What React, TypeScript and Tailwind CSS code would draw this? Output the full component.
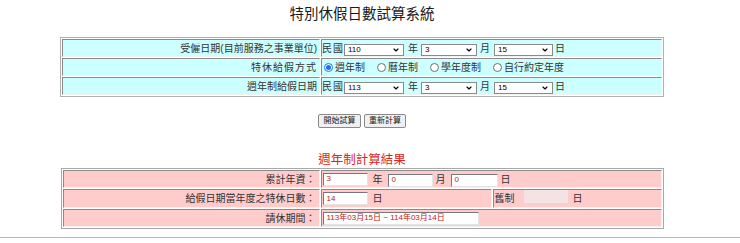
import { ChevronDown } from 'lucide-react'
import clsx from 'clsx'

const cell =
  'h-[18px] border border-t-[#8a8a8a] border-l-[#8a8a8a] border-b-[#f2f2f2] border-r-[#f2f2f2] p-0'

function Select({ value, width }: { value: string; width: string }) {
  return (
    <span
      className={clsx(
        'inline-flex h-[12px] items-center justify-between border border-[#8a8a8a] bg-white pl-[3px] pr-[3px] text-[8px] leading-none text-black',
        width
      )}
    >
      {value}
      <ChevronDown size={8} strokeWidth={3.5} />
    </span>
  )
}

function DateRow({ year }: { year: string }) {
  return (
    <div className="flex items-center">
      <span>民</span>
      <span className="ml-[1px]">國</span>
      <span className="ml-[1px]"><Select value={year} width="w-[60px]" /></span>
      <span className="ml-[4px]">年</span>
      <span className="ml-[3px]"><Select value="3" width="w-[56px]" /></span>
      <span className="ml-[3px]">月</span>
      <span className="ml-[4px]"><Select value="15" width="w-[59px]" /></span>
      <span className="ml-[2px]">日</span>
    </div>
  )
}

function Radio({ checked, label }: { checked?: boolean; label: string }) {
  return (
    <span className="inline-flex items-center gap-[2px]">
      <span
        className={clsx(
          'flex h-[9px] w-[9px] items-center justify-center rounded-full border bg-white',
          checked ? 'border-[#1a73e8]' : 'border-[#6f6f6f]'
        )}
      >
        {checked && <span className="h-[5px] w-[5px] rounded-full bg-[#1a73e8]" />}
      </span>
      {label}
    </span>
  )
}

function TextBox({ value, width, muted }: { value: string; width: string; muted?: boolean }) {
  return (
    <span
      className={clsx(
        'inline-flex h-[13px] items-center pl-[3px] text-[8px] leading-none text-[#c02020]',
        width,
        muted
          ? 'bg-[#f4e3e3]'
          : 'border border-t-[#777] border-l-[#777] border-b-[#e4e4e4] border-r-[#e4e4e4] bg-white'
      )}
    >
      {value}
    </span>
  )
}

export default function App() {
  return (
    <div className="w-[740px] bg-white font-['Liberation_Sans','Noto_Sans_CJK_TC',sans-serif] text-[10px] text-[#333]">
      <div className="flex w-[724px] flex-col items-center">
        <h1 className="pt-[6px] text-[14.5px] leading-[17px] font-normal text-[#1a1a1a]">特別休假日數試算系統</h1>

        <table className="mt-[14px] w-[604px] border-separate border-spacing-[1px] border border-[#b0b0b0] bg-white">
          <tbody className="bg-[#ccffff]">
            <tr>
              <td className={clsx(cell, 'w-[258px] pr-[2px] text-right')}>受僱日期(目前服務之事業單位)</td>
              <td className={cell}>
                <DateRow year="110" />
              </td>
            </tr>
            <tr>
              <td className={clsx(cell, 'pr-[2px] text-right tracking-[1px]')}>特休給假方式</td>
              <td className={cell}>
                <div className="flex items-center gap-[12px] pl-[2px]">
                  <Radio checked label="週年制" />
                  <Radio label="曆年制" />
                  <Radio label="學年度制" />
                  <Radio label="自行約定年度" />
                </div>
              </td>
            </tr>
            <tr>
              <td className={clsx(cell, 'pr-[2px] text-right')}>週年制給假日期</td>
              <td className={cell}>
                <DateRow year="113" />
              </td>
            </tr>
          </tbody>
        </table>

        <div className="mt-[17px] flex gap-[3px]">
          <button className="h-[14px] w-[43px] rounded-[2px] border border-[#8a8a8a] bg-[#f0f0f0] text-[8px] leading-none text-[#222]">
            開始試算
          </button>
          <button className="h-[14px] w-[42px] rounded-[2px] border border-[#8a8a8a] bg-[#f0f0f0] text-[8px] leading-none text-[#222]">
            重新計算
          </button>
        </div>

        <h2 className="mt-[24px] text-[12.5px] leading-[16px] font-normal text-[#e02424]">週年制計算結果</h2>

        <table className="w-[603px] border-separate border-spacing-[1px] border border-[#a8a8a8] bg-white">
          <tbody className="bg-[#ffcccc]">
            <tr>
              <td className={clsx(cell, 'w-[257px] pr-[3px] text-right')}>累計年資：</td>
              <td className={cell} colSpan={2}>
                <div className="flex items-center pl-[1px]">
                  <TextBox value="3" width="w-[45px]" />
                  <span className="ml-[5px]">年</span>
                  <span className="ml-[5px]"><TextBox value="0" width="w-[45px]" /></span>
                  <span className="ml-[3px]">月</span>
                  <span className="ml-[5px]"><TextBox value="0" width="w-[47px]" /></span>
                  <span className="ml-[3px]">日</span>
                </div>
              </td>
            </tr>
            <tr>
              <td className={clsx(cell, 'pr-[3px] text-right')}>給假日期當年度之特休日數：</td>
              <td className={clsx(cell, 'w-[171px]')}>
                <div className="flex items-center pl-[1px]">
                  <TextBox value="14" width="w-[45px]" />
                  <span className="ml-[5px]">日</span>
                </div>
              </td>
              <td className={cell}>
                <div className="flex items-center pl-[1px]">
                  <span>舊制</span>
                  <span className="ml-[9px]"><TextBox value="" width="w-[44px]" muted /></span>
                  <span className="ml-[5px]">日</span>
                </div>
              </td>
            </tr>
            <tr>
              <td className={clsx(cell, 'pr-[3px] text-right')}>請休期間：</td>
              <td className={cell} colSpan={2}>
                <div className="flex items-center pl-[1px]">
                  <TextBox value="113年03月15日 ~ 114年03月14日" width="w-[156px]" />
                </div>
              </td>
            </tr>
          </tbody>
        </table>
      </div>
      <hr className="mt-[8px] border-t border-[#b8b8b8]" />
    </div>
  )
}
